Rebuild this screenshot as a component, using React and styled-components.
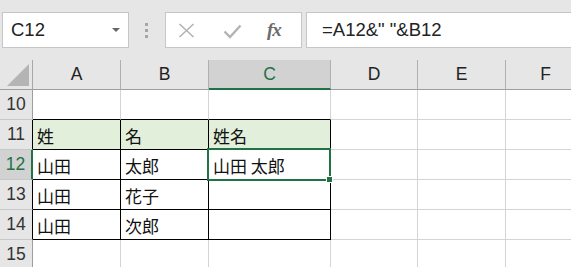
import styled, { createGlobalStyle } from "styled-components";

const GlobalStyle = createGlobalStyle`
  body {
    margin: 0;
    background: #ffffff;
    overflow: hidden;
  }
`;

const GREEN = "#217346";
const GRID = "#d4d4d4";

const Window = styled.div`
  width: 571px;
  height: 267px;
  overflow: hidden;
  background-color: #e6e6e6;
  font-family: "Liberation Sans", Arial, sans-serif;
`;

const TopBar = styled.div`
  display: flex;
  align-items: flex-start;
  height: 60px;
  padding: 12px 0 0 2px;
  box-sizing: border-box;
`;

const Box = styled.div`
  height: 36px;
  box-sizing: border-box;
  background-color: #ffffff;
  border: 1px solid #c6c6c6;
  display: flex;
  align-items: center;
`;

const NameBox = styled(Box)`
  width: 127px;
  padding-left: 8px;
  font-size: 18.5px;
  color: #222;

  & > span {
    flex: 1;
  }
`;

const DropArrow = styled.div`
  width: 0;
  height: 0;
  margin-right: 8px;
  border-left: 4px solid transparent;
  border-right: 4px solid transparent;
  border-top: 4px solid #666;
`;

const Grip = styled.div`
  display: flex;
  flex-direction: column;
  gap: 3px;
  margin: 11px 17px 0 16px;

  & > i {
    width: 3px;
    height: 3px;
    background-color: #a6a6a6;
  }
`;

const FuncButtons = styled(Box)`
  width: 137px;
  padding-left: 12px;
`;

const FuncIcon = styled.div`
  width: ${(p) => p.$w}px;
  display: flex;
  align-items: center;
`;

const Fx = styled.span`
  font-family: "Liberation Serif", "Times New Roman", serif;
  font-style: italic;
  font-weight: bold;
  font-size: 19px;
  color: #6b6b6b;
  letter-spacing: -1px;
`;

const FormulaInput = styled(Box)`
  flex: 1;
  margin-left: 4px;
  border-right: none;
  padding-left: 15px;
  font-size: 18.5px;
  color: #222;
  white-space: pre;
`;

const Sheet = styled.div`
  display: grid;
  grid-template-columns: 33px 88px 88px 122px 87px 88px 80px;
  grid-auto-rows: 30px;
`;

const Cell = styled.div`
  box-sizing: border-box;
  position: relative;
  display: flex;
  align-items: center;
  justify-content: ${(p) => (p.$center ? "center" : "flex-start")};
  padding-left: ${(p) => (p.$center ? 0 : 4)}px;
  padding-top: ${(p) => (p.$center ? 0 : 2)}px;
  background-color: ${(p) => p.$bg || "#ffffff"};
  border-right: ${(p) => p.$rw || 1}px solid ${(p) => p.$right || GRID};
  border-bottom: ${(p) => p.$bw || 1}px solid ${(p) => p.$bottom || GRID};
  color: ${(p) => p.$color || "#111"};
  font-family: ${(p) =>
    p.$center
      ? `"Liberation Sans", Arial, sans-serif`
      : `"Noto Sans CJK JP", sans-serif`};
  font-size: ${(p) => (p.$center ? 17.5 : 17)}px;
  white-space: nowrap;
`;

const Corner = styled(Cell)`
  background-color: #e6e6e6;
  border-right: 1px solid #a8a8a8;
  border-bottom: 1px solid #9e9e9e;
`;

const Triangle = styled.div`
  position: absolute;
  right: 3px;
  bottom: 3px;
  width: 22px;
  height: 22px;
  background-color: #b4b4b4;
  clip-path: polygon(100% 0, 100% 100%, 0 100%);
`;

const Selection = styled.div`
  position: absolute;
  top: -2px;
  left: -2px;
  right: -1px;
  bottom: -2px;
  border: 2px solid ${GREEN};
  z-index: 2;
  pointer-events: none;
`;

const Handle = styled.div`
  position: absolute;
  right: -4px;
  bottom: -4px;
  width: 5px;
  height: 5px;
  background-color: ${GREEN};
  border: 1px solid #ffffff;
`;

const columns = ["A", "B", "C", "D", "E", "F"];

const data = {
  11: ["姓", "名", "姓名"],
  12: ["山田", "太郎", "山田 太郎"],
  13: ["山田", "花子", ""],
  14: ["山田", "次郎", ""],
};

function ColumnHeader({ label, index }) {
  const selected = label === "C";
  return (
    <Cell
      $center
      $bg={selected ? "#d2d2d2" : "#e6e6e6"}
      $right={index === columns.length - 1 ? "transparent" : "#b0b0b0"}
      $bottom={selected ? GREEN : "#9e9e9e"}
      $bw={selected ? 2 : 1}
      $color={selected ? GREEN : "#222"}
    >
      {label}
    </Cell>
  );
}

function RowHeader({ row }) {
  const selected = row === 12;
  const boxed = row >= 11 && row <= 14;
  return (
    <Cell
      $center
      $bg={selected ? "#d2d2d2" : "#e6e6e6"}
      $right={selected ? GREEN : boxed ? "#000" : "#9e9e9e"}
      $rw={selected ? 2 : 1}
      $bottom="#c8c8c8"
      $color={selected ? GREEN : "#333"}
    >
      {row}
    </Cell>
  );
}

function DataCell({ row, col }) {
  const values = data[row] || [];
  const inTable = col < 3;
  const right = inTable && row >= 11 && row <= 14 ? "#000" : GRID;
  const bottom = inTable && row >= 10 && row <= 14 ? "#000" : GRID;
  const selected = row === 12 && col === 2;
  return (
    <Cell
      $bg={row === 11 && inTable ? "#e2efda" : "#ffffff"}
      $right={right}
      $bottom={bottom}
    >
      {values[col] || ""}
      {selected && (
        <Selection>
          <Handle />
        </Selection>
      )}
    </Cell>
  );
}

export default function App() {
  const rows = [10, 11, 12, 13, 14, 15];
  return (
    <Window>
      <GlobalStyle />
      <TopBar>
        <NameBox>
          <span>C12</span>
          <DropArrow />
        </NameBox>
        <Grip>
          <i />
          <i />
          <i />
        </Grip>
        <FuncButtons>
          <FuncIcon $w={45}>
            <svg width="17" height="15" viewBox="0 0 17 15">
              <path d="M1.5 1 L15.5 14 M15.5 1 L1.5 14" stroke="#b3b3b3" strokeWidth="1.6" fill="none" />
            </svg>
          </FuncIcon>
          <FuncIcon $w={44}>
            <svg width="19" height="15" viewBox="0 0 19 15" style={{ marginTop: 3 }}>
              <path d="M1.5 7.5 L7 13 L17.5 1.5" stroke="#b3b3b3" strokeWidth="2.4" fill="none" />
            </svg>
          </FuncIcon>
          <FuncIcon $w={24}>
            <Fx>fx</Fx>
          </FuncIcon>
        </FuncButtons>
        <FormulaInput>{'=A12&" "&B12'}</FormulaInput>
      </TopBar>
      <Sheet>
        <Corner>
          <Triangle />
        </Corner>
        {columns.map((c, i) => (
          <ColumnHeader key={c} label={c} index={i} />
        ))}
        {rows.map((r) => [
          <RowHeader key={`h${r}`} row={r} />,
          ...columns.map((c, i) => <DataCell key={`${c}${r}`} row={r} col={i} />),
        ])}
      </Sheet>
    </Window>
  );
}
